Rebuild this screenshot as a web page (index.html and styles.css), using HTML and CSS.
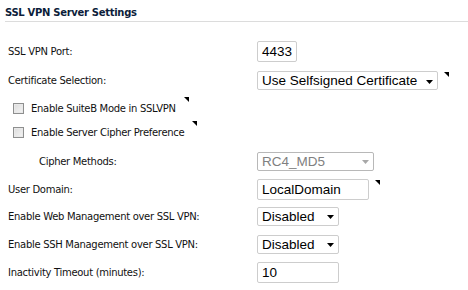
FILE: index.html
```html
<!DOCTYPE html>
<html>
<head>
<meta charset="utf-8">
<link rel="stylesheet" href="styles.css">
</head>
<body>
<div class="panel">
  <h2 class="title">SSL VPN Server Settings</h2>
  <div class="form">
    <div class="row r-port">
      <div class="label">SSL VPN Port:</div>
      <div class="ctl"><div class="input w-port">4433</div></div>
    </div>
    <div class="row r-cert">
      <div class="label">Certificate Selection:</div>
      <div class="ctl"><div class="select w-cert"><span class="val">Use Selfsigned Certificate</span><svg class="arrow" width="7" height="4" viewBox="0 0 7 4"><polygon points="0,0 7,0 3.5,4"/></svg></div><i class="tip"></i></div>
    </div>
    <div class="row r-chk1">
      <div class="label chk"><span class="box"></span>Enable SuiteB Mode in SSLVPN<i class="tip"></i></div>
    </div>
    <div class="row r-chk2">
      <div class="label chk"><span class="box"></span>Enable Server Cipher Preference<i class="tip"></i></div>
    </div>
    <div class="row r-cipher">
      <div class="label indent">Cipher Methods:</div>
      <div class="ctl"><div class="select disabled w-cipher"><span class="val">RC4_MD5</span><svg class="arrow" width="7" height="4" viewBox="0 0 7 4"><polygon points="0,0 7,0 3.5,4"/></svg></div></div>
    </div>
    <div class="row r-domain">
      <div class="label">User Domain:</div>
      <div class="ctl"><div class="input w-domain">LocalDomain</div><i class="tip"></i></div>
    </div>
    <div class="row r-web">
      <div class="label">Enable Web Management over SSL VPN:</div>
      <div class="ctl"><div class="select w-dis"><span class="val">Disabled</span><svg class="arrow" width="7" height="4" viewBox="0 0 7 4"><polygon points="0,0 7,0 3.5,4"/></svg></div></div>
    </div>
    <div class="row r-ssh">
      <div class="label">Enable SSH Management over SSL VPN:</div>
      <div class="ctl"><div class="select w-dis"><span class="val">Disabled</span><svg class="arrow" width="7" height="4" viewBox="0 0 7 4"><polygon points="0,0 7,0 3.5,4"/></svg></div></div>
    </div>
    <div class="row r-time">
      <div class="label">Inactivity Timeout (minutes):</div>
      <div class="ctl"><div class="input w-time">10</div></div>
    </div>
  </div>
</div>
</body>
</html>
```
FILE: styles.css
```css
html, body {
  margin: 0;
  padding: 0;
  background: #ffffff;
}
body {
  width: 468px;
  height: 290px;
  overflow: hidden;
  font-family: "DejaVu Sans", Verdana, sans-serif;
}
.panel {
  padding: 0 0 0 5px;
}
.title {
  margin: 0;
  padding: 7px 0 3px 0;
  font-size: 10px;
  font-weight: bold;
  letter-spacing: -0.3px;
  color: #0c1d3a;
  border-bottom: 1px solid #dcdcdc;
  line-height: 11px;
}
.form {
  padding-top: 15px;
}
.row {
  display: flex;
  align-items: center;
  height: 28px;
}
.r-port { height: 28px; }
.r-cert { height: 31px; }
.r-chk1 { height: 24px; }
.r-chk2 { height: 25px; }
.r-cipher { height: 32px; }
.r-domain { height: 24px; }
.r-web { height: 30px; }
.r-ssh { height: 26px; }
.r-time { height: 30px; }
.label {
  width: 252px;
  padding-left: 3px;
  box-sizing: border-box;
  font-size: 10px;
  letter-spacing: -0.3px;
  color: #111;
  flex: none;
  position: relative;
  white-space: nowrap;
}
.label.indent {
  padding-left: 34px;
}
.label.chk {
  width: auto;
  padding-left: 8px;
  display: flex;
  align-items: center;
}
.box {
  width: 11px;
  height: 11px;
  box-sizing: border-box;
  border: 1px solid #8e8f8f;
  background: linear-gradient(135deg, #dcdcdc 0%, #f4f4f4 100%);
  box-shadow: inset 0 0 0 1px #e9e9e9;
  margin-right: 7px;
  flex: none;
}
.ctl {
  display: flex;
  align-items: flex-start;
  position: relative;
}
.input, .select {
  box-sizing: border-box;
  border: 1px solid #cdcdcd;
  border-radius: 2px;
  font-family: "Liberation Sans", Arial, sans-serif;
  font-size: 13.5px;
  color: #000;
  padding-left: 4px;
  display: flex;
  align-items: center;
  background: #fff;
  white-space: nowrap;
}
.input { height: 21px; }
.select { height: 19px; padding-right: 4px; }
.val {
  flex: 1;
  overflow: hidden;
}
.w-port { width: 40px; }
.w-cert { width: 181px; }
.w-cipher { width: 117px; }
.w-domain { width: 112px; }
.w-dis { width: 82px; }
.w-time { width: 82px; }
.arrow {
  flex: none;
  margin-top: 2px;
  fill: #000;
}
.select.disabled {
  color: #808080;
  border-color: #b8b8b8;
}
.select.disabled .arrow {
  fill: #a8a8a8;
}
.tip {
  display: block;
  width: 0;
  height: 0;
  border-top: 5px solid #000;
  border-left: 5px solid transparent;
  margin-left: 6px;
  margin-top: 1px;
  align-self: flex-start;
}
.label .tip {
  margin-top: -6px;
  margin-left: 8px;
}
```
